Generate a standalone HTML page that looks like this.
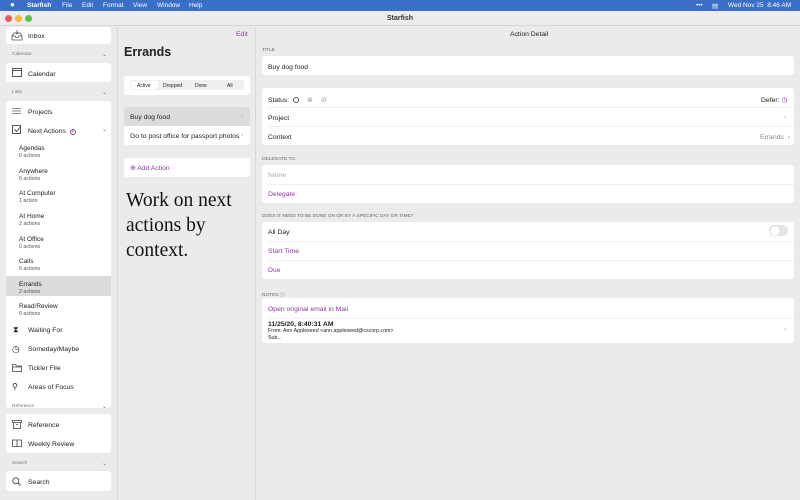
<!DOCTYPE html>
<html><head><style>
*{margin:0;padding:0;box-sizing:border-box}
body{width:800px;height:500px;overflow:hidden;background:#ebebeb;font-family:"Liberation Sans",sans-serif;font-size:6.8px;color:#222;position:relative}
.a{position:absolute}
.menu{left:0;top:0;width:800px;height:11px;background:#3b6fc7;color:#fff;font-size:6.5px}
.menu span{position:absolute;top:2px}
.title{left:0;top:11px;width:800px;height:15px;background:#ececec;border-bottom:1px solid #d6d6d6;text-align:center;font-size:7px;line-height:15px;color:#333;font-weight:bold}
.dot{top:15px;width:7px;height:7px;border-radius:50%}
.side{left:0;top:27px;width:118px;height:473px;background:#ebebeb;border-right:1px solid #d8d8d8}
.card{background:#fff;border-radius:3px}
.si{position:absolute;left:28px;font-size:6.8px;margin-top:1px}
.ic{position:absolute;left:12px;width:10px;height:10px}
.hdr{position:absolute;left:12px;font-size:4.8px;color:#777}
.chev{position:absolute;left:102px;font-size:6px;color:#777}
.sub{position:absolute;left:19px;font-size:6.5px;line-height:7.5px;margin-top:1px}
.sub i{font-style:normal;font-size:5.3px;color:#555;display:block}
.mid{left:118px;top:27px;width:138px;height:473px;background:#ebebeb;border-right:1px solid #d8d8d8}
.lbl{position:absolute;font-size:4.8px;color:#666;left:262px;margin-top:1px}
.row{position:absolute;left:268px;font-size:6.8px;margin-top:1px}
.sep{position:absolute;left:268px;right:6px;height:1px;background:#f0f0f0}
.p{color:#8a3a9e}
</style></head><body>
<div class="a menu">
<span style="left:10px;font-size:8px;top:0px">●</span>
<span style="left:27px;font-weight:bold">Starfish</span>
<span style="left:62px">File</span><span style="left:82px">Edit</span><span style="left:103px">Format</span><span style="left:133px">View</span><span style="left:157px">Window</span><span style="left:189px">Help</span>
<span style="left:696px">•••</span><span style="left:712px">▤</span><span style="left:728px">Wed Nov 25 &nbsp;8:46 AM</span>
</div>
<div class="a title">Starfish</div>
<div class="a dot" style="left:5px;background:#ee5a52"></div>
<div class="a dot" style="left:15px;background:#f4bd3b"></div>
<div class="a dot" style="left:25px;background:#5cc24a"></div>

<div class="a side"></div>
<div class="a card" style="left:6px;top:27px;width:105px;height:17px"></div>
<svg class="a" style="left:11px;top:30px" width="12" height="11" viewBox="0 0 12 11" fill="none" stroke="#555" stroke-width=".8"><path d="M1 6l2-3h6l2 3v4H1z M1 6h3l1 1.5h2L8 6h3 M6 0v4M4.5 2.5L6 4l1.5-1.5"/></svg>
<div class="si" style="top:32px">Inbox</div>
<div class="hdr" style="top:52px">Calendar</div><div class="chev" style="top:51px">⌄</div>
<div class="a card" style="left:6px;top:63px;width:105px;height:19px"></div>
<svg class="a" style="left:12px;top:68px" width="10" height="9" fill="none" stroke="#444" stroke-width=".9"><rect x=".5" y=".5" width="9" height="8"/><path d="M.5 2.5h9"/></svg>
<div class="si" style="top:70px">Calendar</div>
<div class="hdr" style="top:90px">Lists</div><div class="chev" style="top:89px">⌄</div>
<div class="a card" style="left:6px;top:101px;width:105px;height:307px"></div>
<div class="a" style="left:6px;top:276px;width:105px;height:20px;background:#dcdcdc"></div>
<svg class="a" style="left:12px;top:108px" width="9" height="6" stroke="#666" stroke-width=".8"><path d="M0 .5h9M0 3h9M0 5.5h9"/></svg>
<div class="si" style="top:108px">Projects</div>
<svg class="a" style="left:12px;top:125px" width="10" height="10" fill="none" stroke="#444" stroke-width=".9"><rect x=".5" y=".5" width="8" height="8"/><path d="M2.5 4.5l2 2 4-5"/></svg>
<div class="si" style="top:127px">Next Actions <span class="p" style="display:inline-block;width:6px;height:6px;border:.7px solid #8a3a9e;border-radius:50%;font-size:5px;line-height:5px;text-align:center;margin-left:2px">+</span></div>
<div class="chev" style="top:126px">⌄</div>
<div class="sub" style="top:144px">Agendas<i>0 actions</i></div>
<div class="sub" style="top:167px">Anywhere<i>0 actions</i></div>
<div class="sub" style="top:189px">At Computer<i>1 action</i></div>
<div class="sub" style="top:212px">At Home<i>2 actions</i></div>
<div class="sub" style="top:235px">At Office<i>0 actions</i></div>
<div class="sub" style="top:257px">Calls<i>0 actions</i></div>
<div class="sub" style="top:280px">Errands<i>2 actions</i></div>
<div class="sub" style="top:302px">Read/Review<i>0 actions</i></div>
<div class="ic" style="top:325px;font-size:8px;left:13px">⧗</div><div class="si" style="top:326px">Waiting For</div>
<div class="ic" style="top:344px;font-size:9px">◷</div><div class="si" style="top:345px">Someday/Maybe</div>
<svg class="a" style="left:12px;top:364px" width="10" height="8" fill="none" stroke="#444" stroke-width=".8"><path d="M.5 .5h3l1 1.5h5v5.5h-9z M.5 3h9"/></svg><div class="si" style="top:364px">Tickler File</div>
<div class="ic" style="top:382px;font-size:8px">⚲</div><div class="si" style="top:383px">Areas of Focus</div>
<div class="hdr" style="top:404px">Reference</div><div class="chev" style="top:403px">⌄</div>
<div class="a card" style="left:6px;top:414px;width:105px;height:39px"></div>
<svg class="a" style="left:12px;top:420px" width="10" height="9" fill="none" stroke="#444" stroke-width=".8"><rect x=".5" y=".5" width="9" height="2"/><path d="M1.5 2.5v6h7v-6M4 4.5h2"/></svg><div class="si" style="top:421px">Reference</div>
<svg class="a" style="left:12px;top:439px" width="10" height="8" fill="none" stroke="#444" stroke-width=".8"><path d="M.5 1h4l.5 .5.5-.5h4v6.5h-4l-.5.5-.5-.5h-4z M5 1.5v6"/></svg><div class="si" style="top:440px">Weekly Review</div>
<div class="hdr" style="top:461px">Search</div><div class="chev" style="top:460px">⌄</div>
<div class="a card" style="left:6px;top:471px;width:105px;height:20px"></div>
<svg class="a" style="left:12px;top:477px" width="9" height="9" fill="none" stroke="#444" stroke-width=".9"><circle cx="3.8" cy="3.8" r="3"/><path d="M6 6l2.5 2.5"/></svg><div class="si" style="top:478px">Search</div>

<div class="a mid"></div>
<div class="a p" style="left:236px;top:31px;font-size:6.8px">Edit</div>
<div class="a" style="left:124px;top:45px;font-size:12.5px;font-weight:bold">Errands</div>
<div class="a card" style="left:124px;top:76px;width:126px;height:19px"></div>
<div class="a" style="left:130px;top:80px;width:114px;height:10px;background:#efefef;border-radius:3px"></div>
<div class="a" style="left:131px;top:81px;width:27px;height:8px;background:#fff;border-radius:2px"></div>
<div class="a" style="top:83px;left:137px;font-size:5px">Active</div>
<div class="a" style="top:83px;left:163px;font-size:5px">Dropped</div>
<div class="a" style="top:83px;left:195px;font-size:5px">Done</div>
<div class="a" style="top:83px;left:227px;font-size:5px">All</div>
<div class="a card" style="left:124px;top:107px;width:126px;height:38px;overflow:hidden"><div style="height:19px;background:#dcdcdc"></div></div>
<div class="a" style="left:130px;top:114px">Buy dog food</div><div class="a" style="left:241px;top:113px;color:#aaa">›</div>
<div class="a" style="left:130px;top:133px">Go to post office for passport photos</div><div class="a" style="left:241px;top:132px;color:#aaa">›</div>
<div class="a card" style="left:124px;top:158px;width:126px;height:19px"></div>
<div class="a p" style="left:130px;top:164px">⊕ Add Action</div>
<div class="a" style="left:126px;top:188px;font-family:'Liberation Serif',serif;font-size:19.5px;line-height:25px;color:#111">Work on next<br>actions by<br>context.</div>

<div class="a" style="left:510px;top:31px;font-size:6.8px">Action Detail</div>
<div class="lbl" style="top:47px">TITLE</div>
<div class="a card" style="left:262px;top:56px;width:532px;height:19px"></div>
<div class="row" style="top:63px">Buy dog food</div>
<div class="a card" style="left:262px;top:88px;width:532px;height:57px"></div>
<div class="row" style="top:95px">Status: <span style="display:inline-block;width:6px;height:6px;border:.7px solid #555;border-radius:50%;vertical-align:-1px;margin-left:2px"></span><span style="color:#999;margin-left:8px">⊗</span><span style="color:#999;margin-left:8px">⊘</span></div>
<div class="a" style="left:761px;top:96px">Defer: <span class="p">◷</span></div>
<div class="sep" style="top:107px"></div>
<div class="row" style="top:114px">Project</div><div class="a" style="left:784px;top:114px;color:#aaa">›</div>
<div class="sep" style="top:126px"></div>
<div class="row" style="top:133px">Context</div><div class="a" style="left:760px;top:134px;color:#888">Errands &nbsp;›</div>
<div class="lbl" style="top:156px">DELEGATE TO</div>
<div class="a card" style="left:262px;top:165px;width:532px;height:38px"></div>
<div class="row" style="top:171px;color:#aaa">Name</div>
<div class="sep" style="top:184px"></div>
<div class="row p" style="top:190px">Delegate</div>
<div class="lbl" style="top:213px">DOES IT NEED TO BE DONE ON OR BY A SPECIFIC DAY OR TIME?</div>
<div class="a card" style="left:262px;top:222px;width:532px;height:57px"></div>
<div class="row" style="top:228px">All Day</div>
<div class="a" style="left:769px;top:225px;width:19px;height:11px;border-radius:6px;background:#e6e6e6"><div style="width:10px;height:10px;margin:.5px;border-radius:50%;background:#fff;box-shadow:0 0 1px #999"></div></div>
<div class="sep" style="top:241px"></div>
<div class="row p" style="top:247px">Start Time</div>
<div class="sep" style="top:260px"></div>
<div class="row p" style="top:266px">Due</div>
<div class="lbl" style="top:290px">NOTES ⓘ</div>
<div class="a card" style="left:262px;top:298px;width:532px;height:45px"></div>
<div class="row p" style="top:305px">Open original email in Mail</div>
<div class="sep" style="top:318px"></div>
<div class="row" style="top:320px;font-weight:bold">11/25/20, 8:40:31 AM</div>
<div class="row" style="top:327px;font-size:5.3px">From: Ann Appleseed &lt;ann.appleseed@cscorp.com&gt;</div>
<div class="row" style="top:334px;font-size:5.3px">Sub...</div>
<div class="a" style="left:784px;top:326px;color:#aaa">›</div>
</body></html>
